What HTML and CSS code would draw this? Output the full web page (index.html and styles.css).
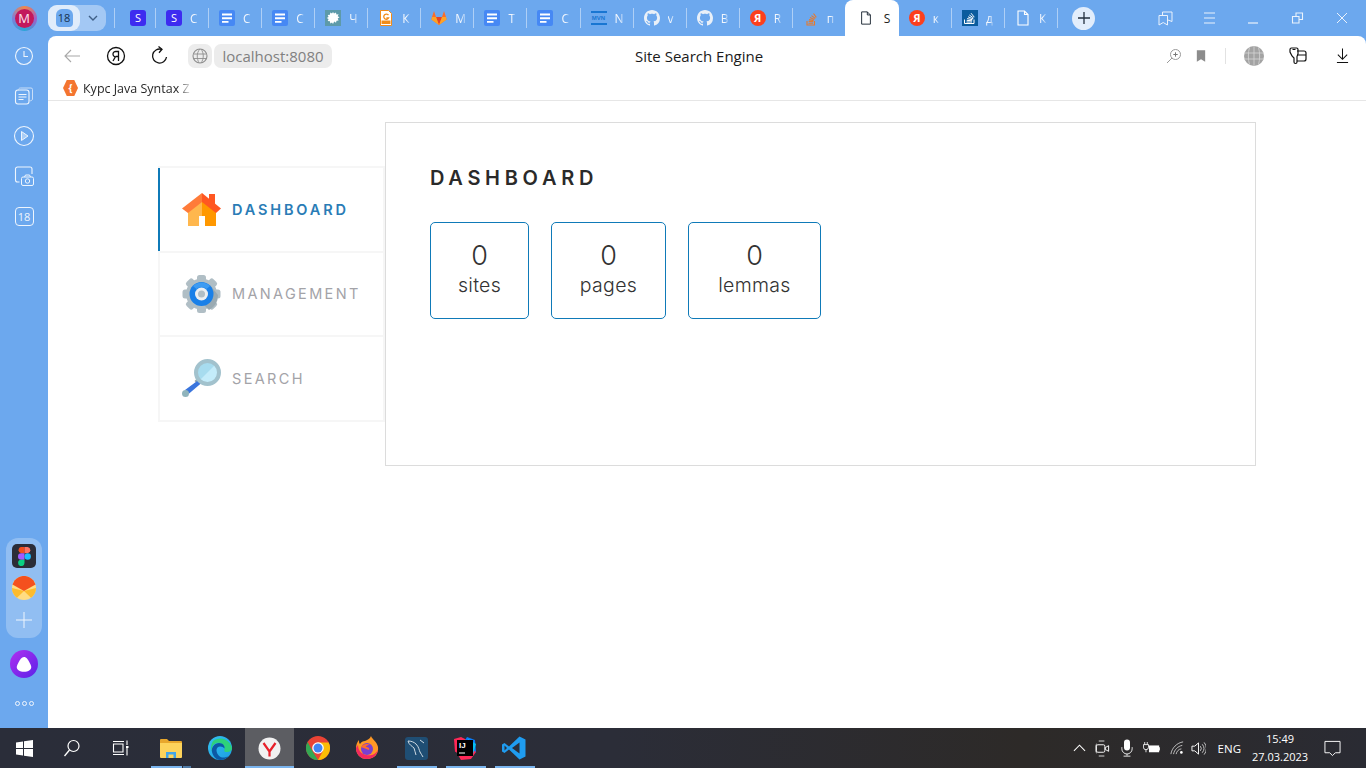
FILE: index.html
```html
<!DOCTYPE html>
<html lang="en">
<head>
<meta charset="utf-8">
<title>Site Search Engine</title>
<link rel="stylesheet" href="styles.css">
</head>
<body>
<svg class="defs" width="0" height="0" aria-hidden="true">
  <symbol id="i-doc" viewBox="0 0 16 16"><rect width="16" height="16" rx="2" fill="#4688f4"/><path d="M3 3.500h10v2H3zM3 7.200h10v2H3zM3 11h6.500v1.800H3z" fill="#fff"/></symbol>
  <symbol id="i-gh" viewBox="0 0 16 16"><path fill="#e9f0f8" d="M8 0C3.58 0 0 3.58 0 8c0 3.54 2.29 6.53 5.47 7.59.4.07.55-.17.55-.38 0-.19-.01-.82-.01-1.49-2.01.37-2.53-.49-2.69-.94-.09-.23-.48-.94-.82-1.13-.28-.15-.68-.52-.01-.53.63-.01 1.08.58 1.23.82.72 1.21 1.87.87 2.33.66.07-.52.28-.87.51-1.07-1.78-.2-3.64-.89-3.64-3.95 0-.87.31-1.59.82-2.15-.08-.2-.36-1.02.08-2.12 0 0 .67-.21 2.2.82.64-.18 1.32-.27 2-.27.68 0 1.36.09 2 .27 1.53-1.04 2.2-.82 2.2-.82.44 1.1.16 1.92.08 2.12.51.56.82 1.27.82 2.15 0 3.07-1.87 3.75-3.65 3.95.29.25.54.73.54 1.48 0 1.07-.01 1.93-.01 2.2 0 .21.15.46.55.38A8.013 8.013 0 0016 8c0-4.42-3.58-8-8-8z"/></symbol>
  <symbol id="i-file" viewBox="0 0 16 16"><path d="M3 1h6.500L13 4.500V15H3zM9.500 1v3.500H13" fill="none" stroke="currentColor" stroke-width="1.100"/></symbol>
</svg>

<div class="browser">
  <header class="tabbar">
    <div class="profile"><span class="avatar">M</span></div>
    <div class="group">
      <span class="group-count"><span class="hex">18</span></span>
      <span class="group-more"><svg width="12" height="8" viewBox="0 0 12 8"><path d="M2 2l4 4 4-4" fill="none" stroke="#3f5f86" stroke-width="1.400"/></svg></span>
    </div>
    <nav class="tabs">
      <div class="tab tab-pin"><span class="fav-s">S</span></div>
      <div class="tab"><span class="fav-s">S</span><span class="tab-label">С</span></div>
      <div class="tab"><svg class="fav"><use href="#i-doc"/></svg><span class="tab-label">С</span></div>
      <div class="tab"><svg class="fav"><use href="#i-doc"/></svg><span class="tab-label">С</span></div>
      <div class="tab"><svg class="fav" viewBox="0 0 16 16"><rect width="16" height="16" fill="#5d9aa9"/><path d="M8 2l1 1.600L11 2.400l.4 2 2.200-.2-.9 2 1.800 1.100-1.800 1.200.9 2-2.100.2-.5 2.100-1.800-1.200L8 14l-1-1.600-1.700 1-.4-2.200-2.200-.1.9-2L1.700 8l1.900-1.100-.9-2 2.200-.1.400-2.200 1.700 1z" fill="#fff"/></svg><span class="tab-label">Ч</span></div>
      <div class="tab"><svg class="fav" viewBox="0 0 16 16"><path d="M2.500.5h8l3 3v12h-11z" fill="#fff" stroke="#f08c1a"/><path d="M10.500 5.200A2.600 2.600 0 1 0 10.600 8H8.400" fill="none" stroke="#f08c1a" stroke-width="1.300"/><path d="M3.500 10.500h9v3.500h-9z" fill="#f08c1a"/></svg><span class="tab-label">К</span></div>
      <div class="tab"><svg class="fav" viewBox="0 0 16 16"><path d="M8 15L.4 9.500 1 7 3 1l2 6h6l2-6 2 6 .6 2.500z" fill="#fc6d26"/><path d="M8 15L5 7h6z" fill="#e24329"/><path d="M8 15L.4 9.500 1 7h4zM8 15l7.600-5.500L15 7h-4z" fill="#fca326"/></svg><span class="tab-label">М</span></div>
      <div class="tab"><svg class="fav"><use href="#i-doc"/></svg><span class="tab-label">Т</span></div>
      <div class="tab"><svg class="fav"><use href="#i-doc"/></svg><span class="tab-label">С</span></div>
      <div class="tab"><span class="fav-mvn">MVN</span><span class="tab-label">N</span></div>
      <div class="tab"><svg class="fav"><use href="#i-gh"/></svg><span class="tab-label">v</span></div>
      <div class="tab"><svg class="fav"><use href="#i-gh"/></svg><span class="tab-label">В</span></div>
      <div class="tab"><span class="fav-ya">Я</span><span class="tab-label">R</span></div>
      <div class="tab"><svg class="fav" viewBox="0 0 16 16"><path d="M4 11v4h7.500v-4M5.500 13.300h4.500M5.700 11.400l4.500.4M6 9.600l4.600 1M7 7.600l4.300 2M8.500 5.600l3.800 2.900M10.500 3.500l2.800 3.800" fill="none" stroke="#e8792b" stroke-width="1.100"/></svg><span class="tab-label">п</span></div>
      <div class="tab tab-active"><svg class="fav fav-dark"><use href="#i-file"/></svg><span class="tab-label">S</span></div>
      <div class="tab"><span class="fav-ya">Я</span><span class="tab-label">к</span></div>
      <div class="tab"><svg class="fav" viewBox="0 0 16 16"><rect width="16" height="16" fill="#0b5c9e"/><path d="M2.500 9.500v4h9.500v-4M4.500 12h5.500M4.700 10.300l5.400.5M5.100 8.600l5.300 1.100M6 6.800l5 2M7.300 5l4.300 3M9 3.200l3.300 4" fill="none" stroke="#fff"/></svg><span class="tab-label">д</span></div>
      <div class="tab"><svg class="fav fav-light"><use href="#i-file"/></svg><span class="tab-label">К</span></div>
    </nav>
    <button class="new-tab" type="button"><svg width="14" height="14" viewBox="0 0 14 14"><path d="M7 1v12M1 7h12" stroke="#24303f" stroke-width="1.300"/></svg></button>
    <div class="win-controls">
      <svg class="win-ic" viewBox="0 0 16 16"><path d="M1 5.500h8.500V15L5.200 12.500 1 15zM4.500 5V2h9.500v9.500L10 10" fill="none" stroke="#eaf2fc"/></svg>
      <svg class="win-ic" viewBox="0 0 16 16"><path d="M2 3h11M2 8h11M2 13h11" stroke="#eaf2fc"/></svg>
      <svg class="win-ic" viewBox="0 0 16 16"><path d="M2 13h10" stroke="#eaf2fc" stroke-width="1.200"/></svg>
      <svg class="win-ic" viewBox="0 0 16 16"><path d="M2.500 6.500h6.500V13H2.500zM6 6V3h6.500v6.500H9.500" fill="none" stroke="#eaf2fc" stroke-width="1.100"/></svg>
      <svg class="win-ic" viewBox="0 0 16 16"><path d="M3 3l10 10M13 3L3 13" stroke="#eaf2fc"/></svg>
    </div>
  </header>

  <aside class="rail">
    <div class="rail-top">
      <span class="rail-item"><svg width="20" height="20" viewBox="0 0 20 20"><circle cx="10" cy="10" r="8.500" fill="none" stroke="#eef5fd" stroke-width="1.100"/><path d="M10 5v5.500h4" fill="none" stroke="#eef5fd" stroke-width="1.100"/></svg></span>
      <span class="rail-item"><svg width="20" height="20" viewBox="0 0 20 20"><rect x="1.500" y="4" width="13.500" height="14" rx="2.500" fill="none" stroke="#eef5fd" stroke-width="1.100"/><path d="M4.500 4.500A2 2 0 0 1 6.500 2H17a1.500 1.500 0 0 1 1.500 1.500V13a2 2 0 0 1-3 1.500" fill="none" stroke="#c9def7"/><path d="M4.500 8.500h8M4.500 11h8M4.500 13.500h5" stroke="#eef5fd"/></svg></span>
      <span class="rail-item"><svg width="22" height="22" viewBox="0 0 22 22"><circle cx="11" cy="11" r="9.500" fill="none" stroke="#eef5fd" stroke-width="1.100"/><path d="M8.500 6.500l6.500 4.500-6.500 4.500z" fill="#a9cdf6" stroke="#eef5fd"/></svg></span>
      <span class="rail-item"><svg width="20" height="20" viewBox="0 0 20 20"><path d="M1.500 14V3a2 2 0 0 1 2-2H16a2 2 0 0 1 2 2v5M1.500 14a2 2 0 0 0 2 2h2" fill="none" stroke="#eef5fd" stroke-width="1.100"/><rect x="7.500" y="11" width="12" height="8.500" rx="1.500" fill="#6ca8ee" stroke="#eef5fd"/><circle cx="13.500" cy="15" r="2.200" fill="none" stroke="#eef5fd"/><path d="M10.500 11l1-2h4l1 2" fill="none" stroke="#eef5fd"/></svg></span>
      <span class="rail-item"><span class="rail-count">18</span></span>
    </div>
    <div class="rail-bottom">
      <div class="dock">
        <span class="dock-app dock-figma"><svg width="13" height="19" viewBox="0 0 13 19"><path d="M6.500 0H3.200a3.200 3.200 0 0 0 0 6.300h3.300z" fill="#f24e1e"/><path d="M6.500 0h3.200a3.200 3.200 0 0 1 0 6.300H6.500z" fill="#ff7262"/><path d="M6.500 6.300H3.200a3.200 3.200 0 0 0 0 6.400h3.300z" fill="#a259ff"/><circle cx="9.700" cy="9.500" r="3.200" fill="#1abcfe"/><path d="M3.200 12.700h3.300V16a3.200 3.200 0 1 1-3.300-3.300z" fill="#0acf83"/></svg></span>
        <span class="dock-app"><svg width="24" height="24" viewBox="0 0 24 24"><circle cx="12" cy="12" r="12" fill="#ffdc82"/><path d="M0 12a12 12 0 0 0 5 9.700L12 15z" fill="#fdbb2d"/><path d="M24 12a12 12 0 0 1-5 9.700L12 15z" fill="#fdbb2d"/><path d="M2.500 4.600a12 12 0 0 1 19 0L23.500 8.500 12 15 .5 8.500z" fill="#f4501e"/></svg></span>
        <span class="dock-plus"><svg width="16" height="16" viewBox="0 0 16 16"><path d="M8 0v16M0 8h16" stroke="#eef5fd"/></svg></span>
      </div>
      <span class="alice"><svg width="16" height="15" viewBox="0 0 16 15"><path d="M8 0c2.500 0 4 2.500 6 6.500 1.500 3 2 5-.5 6.800-3 2-8 2-11 0C0 11.500.5 9.500 2 6.500 4 2.500 5.500 0 8 0z" fill="#fff"/></svg></span>
      <span class="dots"><i></i><i></i><i></i></span>
    </div>
  </aside>

  <div class="window">
    <div class="toolbar">
      <div class="nav-icons">
        <svg class="nav-ic" viewBox="0 0 20 20"><path d="M18 10H3M9 4l-6 6 6 6" fill="none" stroke="#a8a8a8" stroke-width="1.100"/></svg>
        <svg class="nav-ic" viewBox="0 0 20 20"><circle cx="10" cy="10" r="8.500" fill="none" stroke="#111" stroke-width="1.300"/><path d="M12.500 15V5.500H10a2.700 2.700 0 0 0-.6 5.400L7 15M12.500 10.500H9.700" fill="none" stroke="#111" stroke-width="1.300"/></svg>
        <svg class="nav-ic" viewBox="0 0 20 20"><path d="M16.500 11a7 7 0 1 1-5-7.700" fill="none" stroke="#111" stroke-width="1.300"/><path d="M8.500.5l3.500 2.800-3 3.400" fill="none" stroke="#111" stroke-width="1.300"/></svg>
      </div>
      <span class="site-ic"><svg width="16" height="16" viewBox="0 0 16 16"><circle cx="8" cy="8" r="7" fill="none" stroke="#8e8e8e" stroke-width="1.100"/><path d="M1.500 6h13M1.500 10.500h13M8 1C4 5 5 11 7 15M9 1c3 4 3 10 0 14" fill="none" stroke="#8e8e8e" stroke-width=".9"/></svg></span>
      <span class="url">localhost:8080</span>
      <span class="page-title">Site Search Engine</span>
      <div class="tool-right">
        <svg class="tool-zoom" viewBox="0 0 16 16"><circle cx="9.500" cy="6.500" r="5" fill="none" stroke="#9a9a9a"/><path d="M6 10L1 15" stroke="#9a9a9a"/><path d="M9.500 4.300v4.400M7.300 6.500h4.400" stroke="#777"/></svg>
        <svg class="tool-mark" viewBox="0 0 12 14"><path d="M1 0h10v14L6 11l-5 3z" fill="#8c8c8c"/></svg>
        <span class="tool-sep"></span>
        <svg class="tool-globe" viewBox="0 0 20 20"><circle cx="10" cy="10" r="10" fill="#a3a3a3"/><path d="M0 7h20M0 13h20M10 0v20M5.500 1.500C4 6 4 14 5.500 18.500M14.500 1.500c1.500 4.500 1.500 12.500 0 17" fill="none" stroke="#d6d6d6" stroke-width=".8"/></svg>
        <svg class="tool-ext" viewBox="0 0 18 18"><path d="M1 2.500A1.500 1.500 0 0 1 2.500 1h5A1.500 1.500 0 0 1 9 2.500V7L8 9.500V15a1.500 1.500 0 0 1-3 0V11L3 9 1 5z" fill="none" stroke="#111" stroke-width="1.200"/><path d="M8 4h7a2 2 0 0 1 2 2v6a2 2 0 0 1-2 2H8M8 8h9" fill="none" stroke="#111" stroke-width="1.200"/><path d="M3.500 2.500h3" stroke="#111"/></svg>
        <svg class="tool-down" viewBox="0 0 14 16"><path d="M7 0v11M2 6.500L7 11.500l5-5M1 15h12" fill="none" stroke="#111" stroke-width="1.100"/></svg>
      </div>
    </div>
    <div class="bookmarks">
      <span class="bm-ic">{</span>
      <span class="bm-text">Курс Java Syntax Z</span>
    </div>

    <main class="page">
      <ul class="side">
        <li class="side-item side-active">
          <svg class="side-ic" viewBox="0 0 40 40"><path d="M7 17L21 6v31H7z" fill="#ffb74d"/><path d="M21 6l14 11v20H21z" fill="#ff9800"/><path d="M18 27h6v10h-6z" fill="#fff"/><path d="M28 5h6v11l-6-5z" fill="#ff5722"/><path d="M21 4L1 19.500 7 24l14-11z" fill="#ff7b39"/><path d="M21 4l19 15.500L35 24 21 13z" fill="#ff5722"/></svg>
          <span class="side-label">DASHBOARD</span>
        </li>
        <li class="side-item">
          <svg class="side-ic" viewBox="0 0 40 40"><g fill="#b0bec5"><circle cx="20.500" cy="20" r="15.500"/><rect x="16" y="1" width="9" height="38" rx="2.500"/><rect x="1.500" y="15.500" width="38" height="9" rx="2.500"/><rect x="16" y="1" width="9" height="38" rx="2.500" transform="rotate(45 20.500 20)"/><rect x="16" y="1" width="9" height="38" rx="2.500" transform="rotate(-45 20.500 20)"/></g><path d="M29 11L37 21a17 17 0 0 1-9 15L20 28z" fill="#9aaab2"/><circle cx="20.500" cy="20" r="12" fill="#1a80e8"/><path d="M12 12a12 12 0 0 1 17 0l-3.500 3a7 7 0 0 0-10 0z" fill="#3d9bf2"/><circle cx="20.500" cy="20" r="6.500" fill="#eceff1"/><circle cx="20.500" cy="20" r="3.500" fill="#b0bec5"/></svg>
          <span class="side-label">MANAGEMENT</span>
        </li>
        <li class="side-item">
          <svg class="side-ic" viewBox="0 0 40 40"><path d="M16.500 19l3.500 3.500-3 3-3.500-3.500z" fill="#90a4ae"/><path d="M4 31l13.500-10 3 3L7.500 35z" fill="#3a75dd"/><circle cx="4.500" cy="34.500" r="3.500" fill="#90b4bc"/><circle cx="26.500" cy="13.500" r="12" fill="#c4ecfa"/><path d="M18 22A12 12 0 0 1 35 5z" fill="#a7dcef"/><circle cx="26.500" cy="13.500" r="11.500" fill="none" stroke="#a2c2cd" stroke-width="4"/></svg>
          <span class="side-label">SEARCH</span>
        </li>
      </ul>
      <section class="panel">
        <h2 class="panel-title">DASHBOARD</h2>
        <div class="stats">
          <div class="stat"><div class="stat-num">0</div><div class="stat-name">sites</div></div>
          <div class="stat"><div class="stat-num">0</div><div class="stat-name">pages</div></div>
          <div class="stat"><div class="stat-num">0</div><div class="stat-name">lemmas</div></div>
        </div>
      </section>
    </main>
  </div>
</div>

<footer class="taskbar">
  <div class="task-left">
    <span class="t-btn"><svg width="17" height="17" viewBox="0 0 17 17"><path d="M0 2.400l7-1v6.600H0zM8 1.200L17 0v8H8zM0 9h7v6.600l-7-1zM8 9h9v8l-9-1.200z" fill="#fff"/></svg></span>
    <span class="t-btn"><svg width="18" height="18" viewBox="0 0 18 18"><circle cx="10.500" cy="7" r="5.500" fill="none" stroke="#fff" stroke-width="1.200"/><path d="M6.500 11L1.500 17" stroke="#fff" stroke-width="1.300"/></svg></span>
    <span class="t-btn"><svg width="18" height="16" viewBox="0 0 18 16"><path d="M1.500 4h9.500v8H1.500zM1 1.500h11M1 14.500h11M15 .5v4.500M15 8v7.500" fill="none" stroke="#fff" stroke-width="1.100"/><rect x="14" y="6" width="2.500" height="2" fill="#fff"/></svg></span>
    <span class="t-btn t-open-split"><svg width="22" height="20" viewBox="0 0 22 20"><path d="M0 2a1 1 0 0 1 1-1h6l2 2h12a1 1 0 0 1 1 1v3H0z" fill="#e8a72c"/><path d="M0 5h22v14a1 1 0 0 1-1 1H1a1 1 0 0 1-1-1z" fill="#fdd35b"/><path d="M6 14h10v6H6z" fill="#42a5e8"/><path d="M8.500 16.500h5V20h-5z" fill="#fdd35b"/></svg></span>
    <span class="t-btn"><svg width="24" height="24" viewBox="0 0 24 24"><defs><linearGradient id="edgeA" x1="0" y1="0" x2="1" y2="1"><stop offset="0" stop-color="#35c1f1"/><stop offset="1" stop-color="#1b9de2"/></linearGradient></defs><circle cx="12" cy="12" r="12" fill="url(#edgeA)"/><path d="M5 5a12 12 0 0 1 19 7c0 3-3 4.500-6 4-3-.2-1-3-1.500-5C15.500 8 12 6 8.500 7S3 12 4 16A12 12 0 0 1 5 5z" fill="#2ed17a"/><path d="M4 16c-1-5 3-9 7-9 4 0 6 3 5.500 5.500-1.500-2-5-3-7-1s-1 7 3 9.500c3 1 5.500.500 8-1A12 12 0 0 1 12 24C8 24 5 20 4 16z" fill="#0c59a4"/></svg></span>
    <span class="t-btn t-active"><svg class="t-ya" width="23" height="23" viewBox="0 0 23 23"><circle cx="11.500" cy="11.500" r="11" fill="#f1f1f1"/><path d="M5.500 6l6 8.500v5M17.500 6l-6 8.500" fill="none" stroke="#e8202a" stroke-width="2.200"/></svg></span>
    <span class="t-btn"><svg width="24" height="24" viewBox="0 0 24 24"><circle cx="12" cy="12" r="12" fill="#ea4335"/><path d="M1.600 6L7 16l5 8A12 12 0 0 1 1.600 6z" fill="#34a853"/><path d="M12 6.500h10.700A12 12 0 0 1 12 24l5-9z" fill="#fbbc05"/><circle cx="12" cy="12" r="5.800" fill="#fff"/><circle cx="12" cy="12" r="4.500" fill="#4285f4"/></svg></span>
    <span class="t-btn"><svg width="24" height="24" viewBox="0 0 24 24"><path d="M16 0c1 3 6 6 7 11 1 7-4 12-11 12S1 18 1 12c0-3 1-6 3-8 0 2 0 3 1 4 1-2 3-3 5-3 2-1 5-2 6-5z" fill="#ff9824"/><path d="M1 12c0 6 4 11 11 11 6 0 10-4 11-9-3 5-8 6-12 5S3 15 3 9z" fill="#f2295f"/><circle cx="12" cy="13" r="6" fill="#7a3fd0"/><path d="M6 11c2-3 6-4 9-2-2 0-4 .500-4 2 2 0 4 1 3 3" fill="#ff6b2c"/></svg></span>
    <span class="t-btn t-open"><svg width="23" height="23" viewBox="0 0 23 23"><rect width="23" height="23" rx="3" fill="#1f4e74"/><path d="M3 4c3 0 6 1 8 3 3 3 3 6 4 8s2 3 3 5M3 4c1 4 4 5 6 7 1 2 1 5 2 7M15 3l4 3" fill="none" stroke="#cfdae3"/></svg></span>
    <span class="t-btn t-open"><svg width="24" height="24" viewBox="0 0 24 24"><path d="M1 3l7-2 6 3-3 9-9 3z" fill="#fe2857"/><path d="M14 1l8 3 1 12-6-1-6-9z" fill="#087cfa"/><path d="M2 14l5-4 10 2 6 4-5 7-10 1z" fill="#fe2857"/><path d="M15 3l8 5-3 10-6-4z" fill="#07c3f2"/><rect x="4" y="4" width="16" height="16" fill="#000"/><text class="ij" x="6" y="12">IJ</text><path d="M6 17h6" stroke="#fff"/></svg></span>
    <span class="t-btn t-open"><svg width="24" height="24" viewBox="0 0 24 24"><path d="M17.500.500L23.500 3.500v17l-6 3L7 13.500l-4.500 3.500L0 15.500v-7L2.500 7 7 10.500z" fill="#1f9cf0"/><path d="M17.500 6.500v11L10 12z" fill="#2b2e39"/><path d="M2.500 9.500L5 12l-2.500 2.500z" fill="#2b2e39"/></svg></span>
  </div>
  <div class="tray">
    <svg class="tr tr-chev" viewBox="0 0 14 8"><path d="M1 7l6-6 6 6" fill="none" stroke="#fff" stroke-width="1.100"/></svg>
    <svg class="tr tr-cam" viewBox="0 0 16 18"><path d="M4 1h6M4 17h6M2 4A2 2 0 0 0 1 6v6a2 2 0 0 0 1 2" fill="none" stroke="#ddd"/><rect x="1.500" y="5" width="9" height="8" rx="1.500" fill="none" stroke="#fff"/><path d="M11 8l3.500-2v6L11 10z" fill="none" stroke="#fff"/></svg>
    <svg class="tr tr-mic" viewBox="0 0 14 20"><rect x="3.500" y="0" width="7" height="13" rx="3.500" fill="#fff"/><path d="M1 9v2a6 6 0 0 0 12 0V9M7 17v2M3 19.500h8" fill="none" stroke="#fff"/></svg>
    <svg class="tr tr-bat" viewBox="0 0 20 14"><path d="M2 0v3M5 0v3M.5 3h6v3a3 3 0 0 1-6 0zM3.500 9v3" fill="none" stroke="#fff"/><rect x="7" y="4" width="12" height="8" fill="#fff"/><path d="M19 6h1v4h-1z" fill="#fff"/></svg>
    <svg class="tr tr-wifi" viewBox="0 0 16 16"><path d="M1 15C2 8 8 2 15 1M4 15c1-5 5-9 10-10M7 15c.500-3 3-6 6-6" fill="none" stroke="#cfcfcf"/><circle cx="13" cy="13" r="1.500" fill="#fff"/></svg>
    <svg class="tr tr-vol" viewBox="0 0 16 16"><path d="M1 5.500h3L8 2v12l-4-3.500H1z" fill="none" stroke="#fff"/><path d="M10 5.500a4 4 0 0 1 0 5M12 3.500a7 7 0 0 1 0 9M14 1.500a10 10 0 0 1 0 13" fill="none" stroke="#ccc"/></svg>
    <span class="lang">ENG</span>
    <span class="clock"><span>15:49</span><span>27.03.2023</span></span>
    <svg class="tr tr-note" viewBox="0 0 18 18"><path d="M1 1.500h16v12h-5l-3 3-3-3H1z" fill="none" stroke="#fff"/></svg>
  </div>
</footer>
</body>
</html>
```

FILE: styles.css
```css
* { box-sizing: border-box; }
html, body { margin: 0; height: 100%; }
body {
  display: flex;
  flex-direction: column;
  height: 100vh;
  overflow: hidden;
  font-family: "Open Sans", "Noto Sans", sans-serif;
  background: #fff;
}
.defs { position: absolute; }

/* browser frame */
.browser {
  flex: 1;
  min-height: 0;
  display: grid;
  grid-template-columns: 48px 1fr;
  grid-template-rows: 36px 1fr;
  background: #6ca8ee;
}
.tabbar {
  grid-column: 1 / 3;
  display: flex;
  align-items: center;
  height: 36px;
}
.profile { width: 48px; display: flex; justify-content: center; }
.avatar {
  width: 25px; height: 25px;
  border-radius: 50%;
  border: 3px solid transparent;
  background:
    linear-gradient(#c2185b, #c2185b) padding-box,
    conic-gradient(#f0884a, #a45ec8, #2aa6d8, #7f7fd8, #f0884a) border-box;
  color: #fbe3ee;
  font-size: 13px;
  display: flex; align-items: center; justify-content: center;
}
.group {
  width: 58px; height: 26px;
  display: flex;
  border-radius: 9px;
  background: #a3c8f4;
}
.group-count {
  width: 32px;
  border-radius: 9px;
  background: #e0ecfb;
  display: flex; align-items: center; justify-content: center;
}
.hex {
  width: 17px; height: 18px;
  border-radius: 6px 6px 4px 4px;
  background: #6ca8ee;
  color: #17324f;
  font-size: 11px;
  line-height: 18px;
  text-align: center;
}
.group-more { flex: 1; display: flex; align-items: center; justify-content: center; }
.tabs {
  margin-left: 8px;
  width: 944px;
  display: flex;
  align-items: center;
  height: 36px;
}
.tabs::before {
  content: "";
  width: 1px; height: 20px;
  background: rgba(255,255,255,.45);
}
.tab {
  flex: 1;
  min-width: 0;
  height: 20px;
  padding-left: 10px;
  display: flex;
  align-items: center;
  gap: 8px;
  border-right: 1px solid rgba(255,255,255,.45);
  overflow: hidden;
}
.tab-pin { flex: 0 0 41px; padding-left: 15px; }
.tab-label {
  color: #f1f6fd;
  font-size: 12px;
  -webkit-mask-image: linear-gradient(90deg, #000 55%, rgba(0,0,0,.25) 100%);
  mask-image: linear-gradient(90deg, #000 55%, rgba(0,0,0,.25) 100%);
}
.fav { width: 16px; height: 16px; flex: none; color: #fff; }
.fav-dark { color: #1f2a36; }
.fav-light { color: #fff; }
.fav-s {
  width: 16px; height: 16px; flex: none;
  border-radius: 3px;
  background: #3d2bf0;
  color: #fff;
  font-size: 11px;
  line-height: 16px;
  text-align: center;
}
.fav-ya {
  width: 16px; height: 16px; flex: none;
  border-radius: 50%;
  background: #fc3f1d;
  color: #fff;
  font-size: 11px;
  font-weight: 700;
  line-height: 16px;
  text-align: center;
}
.fav-mvn {
  width: 16px; height: 14px; flex: none;
  border-top: 2px solid #1976d2;
  border-bottom: 2px solid #1976d2;
  color: #1976d2;
  font: 700 6px/10px "Liberation Sans", sans-serif;
  text-align: center;
}
.tab-active {
  position: relative;
  align-self: flex-end;
  height: 36px;
  flex: 0 0 54px;
  margin-left: -1px;
  padding-left: 14px;
  gap: 11px;
  background: #fff;
  border-right: 0;
  border-radius: 8px 8px 0 0;
  overflow: visible;
}
.tab-active .tab-label {
  color: #222;
  -webkit-mask-image: none;
  mask-image: none;
}
.tab-active .fav { width: 14px; height: 16px; }
.new-tab {
  margin-left: 14px;
  width: 23px; height: 23px;
  padding: 0;
  border: 0;
  border-radius: 50%;
  background: #e2edfb;
  display: flex; align-items: center; justify-content: center;
}
.win-controls {
  margin-left: 63px;
  display: flex;
  align-items: center;
  gap: 28px;
}
.win-ic { width: 16px; height: 16px; }

/* left rail */
.rail {
  display: flex;
  flex-direction: column;
  justify-content: space-between;
  align-items: center;
}
.rail-top { display: flex; flex-direction: column; }
.rail-item {
  width: 48px; height: 40px;
  display: flex; align-items: center; justify-content: center;
}
.rail-count {
  width: 19px; height: 19px;
  border: 1px solid #eef5fd;
  border-radius: 4px;
  color: #eef5fd;
  font-size: 11px;
  line-height: 17px;
  text-align: center;
}
.rail-bottom {
  display: flex;
  flex-direction: column;
  align-items: center;
  padding-bottom: 21px;
}
.dock {
  width: 36px; height: 100px;
  padding-top: 6px;
  border-radius: 12px;
  background: rgba(255,255,255,.25);
  display: flex;
  flex-direction: column;
  align-items: center;
  gap: 8px;
}
.dock-app { width: 24px; height: 24px; display: flex; align-items: center; justify-content: center; }
.dock-figma { background: #2b2d38; border-radius: 5px; }
.dock-plus { margin-top: 4px; height: 16px; display: flex; }
.alice {
  margin-top: 12px;
  width: 28px; height: 28px;
  border-radius: 50%;
  background: linear-gradient(135deg, #b02ff0, #5a22e8);
  display: flex; align-items: center; justify-content: center;
}
.dots { margin-top: 23px; display: flex; gap: 2px; height: 6px; }
.dots i {
  width: 5px; height: 5px;
  border: 1.500px solid #f1f6fd;
  border-radius: 50%;
}

/* window */
.window {
  background: #fff;
  border-radius: 8px 8px 0 0;
  display: flex;
  flex-direction: column;
  min-height: 0;
}
.toolbar {
  height: 40px;
  position: relative;
  display: flex;
  align-items: center;
  padding-left: 14px;
}
.nav-icons { display: flex; gap: 24px; }
.nav-ic { width: 20px; height: 20px; }
.site-ic {
  margin-left: 18px;
  width: 24px; height: 24px;
  border-radius: 7px;
  background: #ececec;
  display: flex; align-items: center; justify-content: center;
}
.url {
  margin-left: 2px;
  width: 118px; height: 24px;
  border-radius: 7px;
  background: #ececec;
  color: #808080;
  font-size: 15px;
  line-height: 25px;
  text-align: center;
}
.page-title {
  position: absolute;
  left: 587px;
  top: 9px;
  color: #1b1b1b;
  font-size: 15px;
  line-height: 22px;
}
.tool-right {
  margin-left: auto;
  padding-right: 17px;
  display: flex;
  align-items: center;
}
.tool-zoom { width: 16px; height: 16px; }
.tool-mark { margin-left: 14px; width: 10px; height: 14px; }
.tool-sep { margin-left: 19px; width: 1px; height: 16px; background: #e2e2e2; }
.tool-globe { margin-left: 18px; width: 20px; height: 20px; }
.tool-ext { margin-left: 25px; width: 18px; height: 18px; }
.tool-down { margin-left: 29px; width: 13px; height: 16px; }

.bookmarks {
  height: 25px;
  flex: none;
  padding-left: 15px;
  display: flex;
  align-items: center;
  gap: 5px;
  border-bottom: 1px solid #e6e6e6;
}
.bm-ic {
  width: 15px; height: 16px;
  clip-path: polygon(25% 0, 75% 0, 100% 50%, 75% 100%, 25% 100%, 0 50%);
  background: #f47530;
  color: #fff;
  font-size: 10px;
  font-weight: 700;
  line-height: 16px;
  text-align: center;
}
.bm-text {
  color: #222;
  font-size: 12.500px;
  background: linear-gradient(90deg, #222 88%, #ddd 100%);
  -webkit-background-clip: text;
  background-clip: text;
  -webkit-text-fill-color: transparent;
}

/* page content */
.page {
  flex: 1;
  padding: 21px 110px 0;
  display: flex;
  align-items: flex-start;
  font-family: Inter, "Liberation Sans", sans-serif;
}
.side {
  list-style: none;
  margin: 44px 0 0;
  padding: 0;
  width: 227px;
  flex: none;
}
.side-item {
  height: 86.670px;
  margin-bottom: -2px;
  padding-left: 21px;
  display: flex;
  align-items: center;
  gap: 11px;
  border: 2px solid #f6f6f6;
}
.side-active { position: relative; }
.side-active::before {
  content: "";
  position: absolute;
  left: -2px; top: 0; bottom: 0;
  width: 2px;
  background: #0f7ab8;
}
.side-ic { width: 40px; height: 40px; flex: none; }
.side-label {
  color: #a3a3a8;
  font-size: 14.500px;
  letter-spacing: 2.350px;
}
.side-active .side-label {
  color: #2a7cb6;
  font-weight: 600;
  letter-spacing: 2.850px;
}
.panel {
  width: 871px;
  height: 344px;
  padding: 43px 44px 44px;
  border: 1px solid #dcdcdc;
}
.panel-title {
  margin: 0 0 32px;
  color: #2a2a2a;
  font-size: 20px;
  font-weight: 600;
  line-height: 24px;
  letter-spacing: 4.700px;
}
.stats {
  display: grid;
  grid-template-columns: 99px 115px 133px;
  gap: 22px;
}
.stat {
  height: 97px;
  padding-top: 17px;
  border: 1px solid #0f7ab8;
  border-radius: 5px;
  text-align: center;
  color: #333;
}
.stat-num { font-size: 27px; font-weight: 300; line-height: 31px; }
.stat-name { font-size: 19.500px; font-weight: 300; line-height: 28px; letter-spacing: .3px; }

/* taskbar */
.taskbar {
  height: 40px;
  flex: none;
  display: flex;
  justify-content: space-between;
  background: linear-gradient(90deg, #2a2d39 0%, #2b2d38 45%, #2d2a28 75%, #2a2b33 100%);
  color: #fff;
}
.task-left { display: flex; }
.t-btn {
  width: 49px; height: 40px;
  padding-right: 1px;
  display: flex; align-items: center; justify-content: center;
}
.t-btn:first-child { width: 48px; padding-right: 0; }
.t-btn:nth-child(4) { margin-left: 1px; }
.t-open { background: linear-gradient(#7ab4ee, #7ab4ee) 50% 100% / 40px 2px no-repeat; }
.t-open-split {
  background: linear-gradient(#7ab4ee, #7ab4ee) 4px 100% / 31px 2px no-repeat,
              linear-gradient(#4f7aa6, #4f7aa6) 36px 100% / 8px 2px no-repeat;
}
.t-active { background: #5c5d62; box-shadow: inset 0 -2px 0 #7ab4ee; }
.ij { fill: #fff; font: 700 8px "Liberation Sans", sans-serif; }
.tray {
  display: flex;
  align-items: center;
  padding-right: 25px;
  font-family: "Open Sans", sans-serif;
}
.tr { flex: none; }
.tr-chev { width: 13px; height: 8px; }
.tr-cam { margin-left: 9px; width: 15px; height: 17px; }
.tr-mic { margin-left: 11px; width: 12px; height: 18px; }
.tr-bat { margin-left: 10px; width: 17px; height: 12px; }
.tr-wifi { margin-left: 10px; width: 14px; height: 14px; }
.tr-vol { margin-left: 7px; width: 15px; height: 15px; }
.lang { margin-left: 12px; font-size: 11.500px; }
.clock {
  margin-left: 5px;
  width: 68px;
  display: flex;
  flex-direction: column;
  align-items: center;
  font-size: 11px;
  line-height: 18px;
}
.tr-note { margin-left: 10px; width: 17px; height: 17px; }
```
